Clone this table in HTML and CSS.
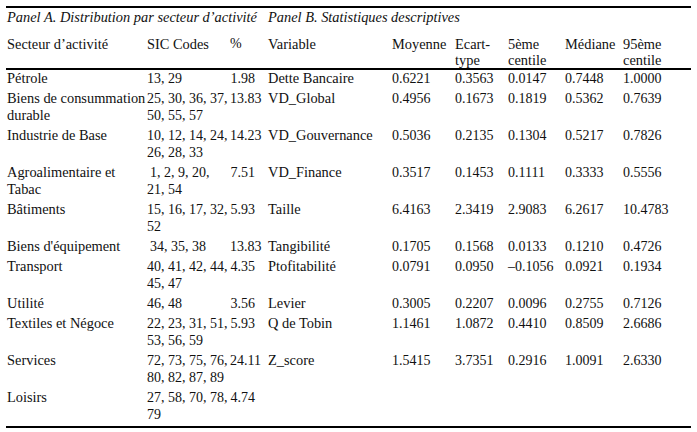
FILE: index.html
```html
<!DOCTYPE html>
<html lang="fr">
<head>
<meta charset="utf-8">
<title>Panel A / Panel B</title>
<link rel="stylesheet" href="styles.css">
</head>
<body>
<table class="stats">
  <colgroup>
    <col class="c-sect"><col class="c-sic"><col class="c-pct"><col class="c-var">
    <col class="c-moy"><col class="c-ecart"><col class="c-p5"><col class="c-med"><col class="c-p95">
  </colgroup>
  <thead>
    <tr class="panel-row">
      <th colspan="3">Panel A. Distribution par secteur d’activité</th>
      <th colspan="6">Panel B. Statistiques descriptives</th>
    </tr>
    <tr class="head-row">
      <th class="txt">Secteur d’activité</th>
      <th class="txt">SIC Codes</th>
      <th class="pct-h">%</th>
      <th class="txt">Variable</th>
      <th class="txt">Moyenne</th>
      <th class="txt">Ecart-<br>type</th>
      <th class="txt">5ème<br>centile</th>
      <th class="txt">Médiane</th>
      <th class="txt">95ème<br>centile</th>
    </tr>
  </thead>
  <tbody>
    <tr><td class="txt">Pétrole</td><td>13, 29</td><td class="pct">1.98</td><td class="txt">Dette Bancaire</td><td>0.6221</td><td>0.3563</td><td>0.0147</td><td>0.7448</td><td>1.0000</td></tr>
    <tr><td class="txt">Biens de consummation<br>durable</td><td>25, 30, 36, 37,<br>50, 55, 57</td><td class="pct">13.83</td><td class="txt">VD_Global</td><td>0.4956</td><td>0.1673</td><td>0.1819</td><td>0.5362</td><td>0.7639</td></tr>
    <tr><td class="txt">Industrie de Base</td><td>10, 12, 14, 24,<br>26, 28, 33</td><td class="pct">14.23</td><td class="txt">VD_Gouvernance</td><td>0.5036</td><td>0.2135</td><td>0.1304</td><td>0.5217</td><td>0.7826</td></tr>
    <tr><td class="txt">Agroalimentaire et<br>Tabac</td><td><span class="ind">1, 2, 9, 20,</span><br>21, 54</td><td class="pct">7.51</td><td class="txt">VD_Finance</td><td>0.3517</td><td>0.1453</td><td>0.1111</td><td>0.3333</td><td>0.5556</td></tr>
    <tr><td class="txt">Bâtiments</td><td>15, 16, 17, 32,<br>52</td><td class="pct">5.93</td><td class="txt">Taille</td><td>6.4163</td><td>2.3419</td><td>2.9083</td><td>6.2617</td><td>10.4783</td></tr>
    <tr><td class="txt">Biens d'équipement</td><td><span class="ind">34, 35, 38</span></td><td class="pct">13.83</td><td class="txt">Tangibilité</td><td>0.1705</td><td>0.1568</td><td>0.0133</td><td>0.1210</td><td>0.4726</td></tr>
    <tr><td class="txt">Transport</td><td>40, 41, 42, 44,<br>45, 47</td><td class="pct">4.35</td><td class="txt">Ptofitabilité</td><td>0.0791</td><td>0.0950</td><td class="neg">–0.1056</td><td>0.0921</td><td>0.1934</td></tr>
    <tr><td class="txt">Utilité</td><td>46, 48</td><td class="pct">3.56</td><td class="txt">Levier</td><td>0.3005</td><td>0.2207</td><td>0.0096</td><td>0.2755</td><td>0.7126</td></tr>
    <tr><td class="txt">Textiles et Négoce</td><td>22, 23, 31, 51,<br>53, 56, 59</td><td class="pct">5.93</td><td class="txt">Q de Tobin</td><td>1.1461</td><td>1.0872</td><td>0.4410</td><td>0.8509</td><td>2.6686</td></tr>
    <tr><td class="txt">Services</td><td>72, 73, 75, 76,<br>80, 82, 87, 89</td><td class="pct">24.11</td><td class="txt">Z_score</td><td>1.5415</td><td>3.7351</td><td>0.2916</td><td>1.0091</td><td>2.6330</td></tr>
    <tr class="last"><td class="txt">Loisirs</td><td>27, 58, 70, 78,<br>79</td><td class="pct">4.74</td><td></td><td></td><td></td><td></td><td></td><td></td></tr>
  </tbody>
</table>
</body>
</html>
```

FILE: styles.css
```css
html, body {
  margin: 0;
  padding: 0;
  background: #ffffff;
}

body {
  padding: 6px 0 0 6px;
  font-family: "Liberation Serif", "Times New Roman", serif;
  font-size: 14px;
  color: #111111;
}

.stats {
  table-layout: fixed;
  width: 685px;
  border-collapse: separate;
  border-spacing: 0;
}

.c-sect { width: 141px; }
.c-sic { width: 83px; }
.c-pct { width: 38px; }
.c-var { width: 124px; }
.c-moy { width: 63px; }
.c-ecart { width: 53px; }
.c-p5 { width: 57px; }
.c-med { width: 58px; }
.c-p95 { width: 68px; }

.stats th,
.stats td {
  padding: 0;
  text-align: left;
  vertical-align: top;
  white-space: nowrap;
  overflow: visible;
  font-weight: normal;
}

.stats .txt {
  font-size: 14.4px;
}

.stats th:first-child,
.stats td:first-child {
  padding-left: 1px;
}

.panel-row th {
  border-top: 2px solid #000;
  font-style: italic;
  font-size: 14.4px;
  line-height: 18px;
  padding-bottom: 2px;
}

.head-row th {
  line-height: 16px;
  padding-top: 8px;
  padding-bottom: 0;
  border-bottom: 2px solid #000;
}

.stats td {
  line-height: 17px;
  padding-bottom: 3px;
}

.stats tr.last td {
  border-bottom: 2px solid #000;
}

.stats td.pct {
  text-align: right;
  padding-right: 13px;
}

.ind {
  padding-left: 3px;
}

.neg {
  margin-left: -1px;
}
```
